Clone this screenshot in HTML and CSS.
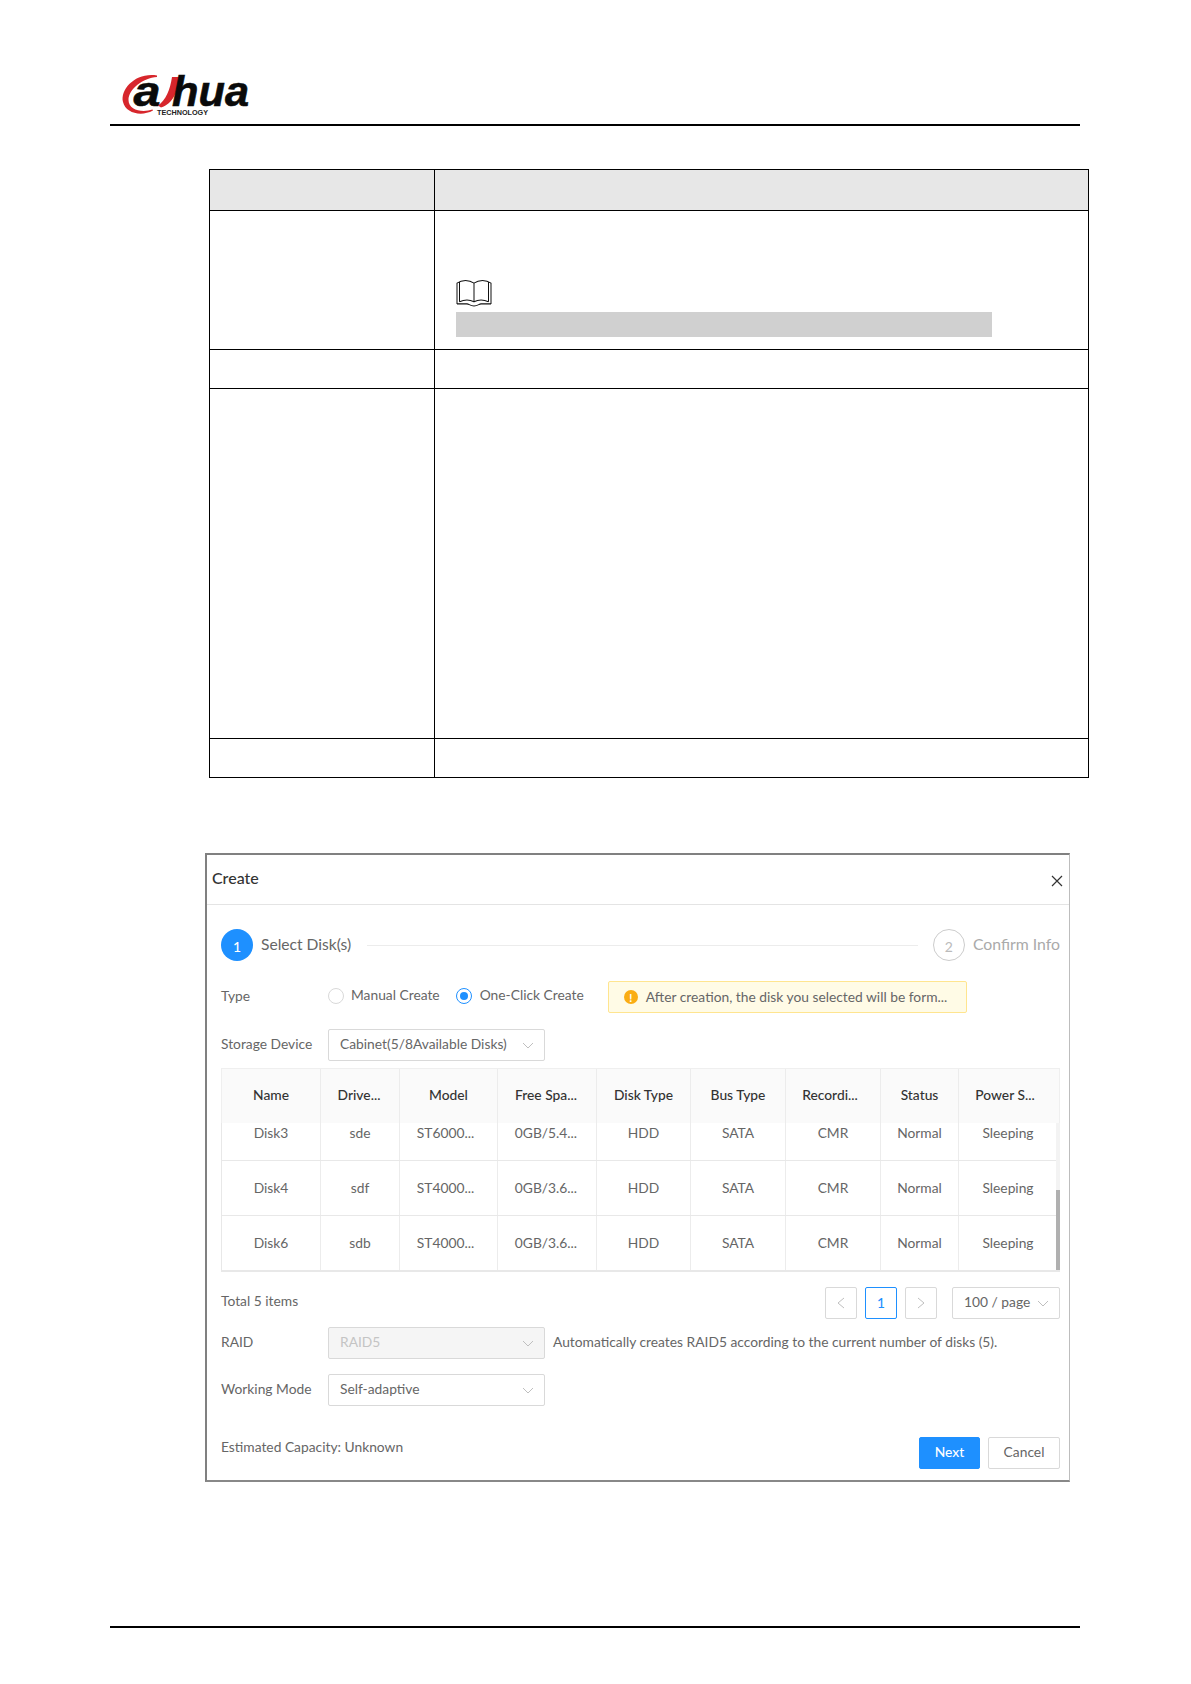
FILE: index.html
```html
<!DOCTYPE html>
<html lang="en">
<head>
<meta charset="utf-8">
<title>Create</title>
<link rel="stylesheet" href="styles.css">
</head>
<body>
<header class="page-head">
  <svg class="logo" width="130" height="46" viewBox="120 72 130 46">
    <path class="logo-red" d="M157 75.500C136 72 120 89 123 102C125.500 113 141 117 153 110.500L152.500 109.500C142 113 128.500 110 128.500 100C128.500 89 143 78 157 77Z"/>
    <text class="logo-word" x="133.500" y="106" textLength="27" lengthAdjust="spacingAndGlyphs">a</text>
    <path class="logo-red" d="M172 77L179 77C178 91 173 104 161 107.500L158 105.500C166 100 170 90 172 77Z"/>
    <text class="logo-word" x="172" y="106" textLength="77" lengthAdjust="spacingAndGlyphs">hua</text>
    <text class="logo-tech" x="157" y="115" textLength="51" lengthAdjust="spacingAndGlyphs">TECHNOLOGY</text>
  </svg>
</header>

<table class="spec">
  <tr class="spec-head"><td class="spec-a"></td><td></td></tr>
  <tr class="spec-note">
    <td></td>
    <td>
      <svg class="book" width="36" height="28" viewBox="0 0 36 27" preserveAspectRatio="none">
        <path d="M1 24V4C6 0.500 13 0.500 18 4C23 0.500 30 0.500 35 4V24"/>
        <path d="M3.500 22V3M32.500 22V3M18 4V22"/>
        <path d="M3.500 22C8 20 14 20 18 22C22 20 28 20 32.500 22"/>
        <path d="M1 24H11C13 24 14 26 18 26C22 26 23 24 25 24H35"/>
      </svg>
      <div class="redacted"></div>
    </td>
  </tr>
  <tr class="spec-short"><td></td><td></td></tr>
  <tr class="spec-tall"><td></td><td></td></tr>
  <tr class="spec-short"><td></td><td></td></tr>
</table>

<section class="dialog">
  <div class="dialog-head">
    <h2 class="dialog-title">Create</h2>
    <svg class="close" width="12" height="12" viewBox="0 0 12 12"><path d="M1 1L11 11M11 1L1 11"/></svg>
  </div>
  <div class="dialog-body">
    <div class="steps">
      <span class="step-dot step-dot-on">1</span>
      <span class="step-label">Select Disk(s)</span>
      <span class="step-line"></span>
      <span class="step-dot step-dot-off">2</span>
      <span class="step-label step-label-off">Confirm Info</span>
    </div>

    <div class="form-row form-type">
      <span class="form-label">Type</span>
      <span class="radio"></span><span class="radio-text">Manual Create</span>
      <span class="radio radio-on"></span><span class="radio-text radio-text-on">One-Click Create</span>
      <div class="alert">
        <span class="alert-icon">!</span>
        <span class="alert-text">After creation, the disk you selected will be form...</span>
      </div>
    </div>

    <div class="form-row form-storage">
      <span class="form-label">Storage Device</span>
      <div class="select"><span>Cabinet(5/8Available Disks)</span><svg class="chev" width="12" height="7" viewBox="0 0 12 7"><path d="M1 1L6 6L11 1"/></svg></div>
    </div>

    <div class="disk-table">
      <div class="disk-head">
        <div class="disk-row">
          <div>Name</div><div class="cell-cut-s">Drive...</div><div>Model</div><div class="cell-cut-s">Free Spa...</div><div>Disk Type</div><div>Bus Type</div><div class="cell-cut-l">Recordi...</div><div>Status</div><div class="cell-cut-l">Power S...</div>
        </div>
      </div>
      <div class="disk-body">
        <div class="disk-clip">
          <div class="disk-scroll">
            <div class="disk-row">
              <div>Disk3</div><div>sde</div><div class="cell-cut-l">ST6000...</div><div class="cell-cut-s">0GB/5.4...</div><div>HDD</div><div>SATA</div><div>CMR</div><div>Normal</div><div>Sleeping</div>
            </div>
            <div class="disk-row">
              <div>Disk4</div><div>sdf</div><div class="cell-cut-l">ST4000...</div><div class="cell-cut-s">0GB/3.6...</div><div>HDD</div><div>SATA</div><div>CMR</div><div>Normal</div><div>Sleeping</div>
            </div>
            <div class="disk-row">
              <div>Disk6</div><div>sdb</div><div class="cell-cut-l">ST4000...</div><div class="cell-cut-s">0GB/3.6...</div><div>HDD</div><div>SATA</div><div>CMR</div><div>Normal</div><div>Sleeping</div>
            </div>
          </div>
        </div>
        <div class="scrollbar"><div class="scroll-thumb"></div></div>
      </div>
    </div>

    <div class="pager">
      <span class="pager-total">Total 5 items</span>
      <span class="page-btn"><svg class="page-arrow" width="8" height="12" viewBox="0 0 8 12"><path d="M7 1L1 6L7 11"/></svg></span>
      <span class="page-btn page-current">1</span>
      <span class="page-btn"><svg class="page-arrow" width="8" height="12" viewBox="0 0 8 12"><path d="M1 1L7 6L1 11"/></svg></span>
      <div class="select select-page"><span>100 / page</span><svg class="chev" width="12" height="7" viewBox="0 0 12 7"><path d="M1 1L6 6L11 1"/></svg></div>
    </div>

    <div class="form-row form-raid">
      <span class="form-label">RAID</span>
      <div class="select select-off"><span>RAID5</span><svg class="chev" width="12" height="7" viewBox="0 0 12 7"><path d="M1 1L6 6L11 1"/></svg></div>
      <span class="form-hint">Automatically creates RAID5 according to the current number of disks (5).</span>
    </div>

    <div class="form-row form-mode">
      <span class="form-label">Working Mode</span>
      <div class="select"><span>Self-adaptive</span><svg class="chev" width="12" height="7" viewBox="0 0 12 7"><path d="M1 1L6 6L11 1"/></svg></div>
    </div>

    <div class="dialog-foot">
      <span class="capacity">Estimated Capacity: Unknown</span>
      <button class="btn btn-primary" type="button">Next</button>
      <button class="btn" type="button">Cancel</button>
    </div>
  </div>
</section>

<div class="page-foot"></div>
</body>
</html>
```
FILE: styles.css
```css
* { box-sizing: border-box; }
html, body { margin: 0; padding: 0; background: #fff; }
body { font-family: Lato, "Open Sans", "Liberation Sans", sans-serif; font-size: 13.800px; color: #666; width: 1191px; min-height: 1684px; overflow-x: hidden; }

.page-head { margin-left: 110px; width: 970px; height: 126px; padding: 72px 0 0 10px; border-bottom: 2px solid #000; }
.logo { display: block; overflow: visible; }
.logo-red { fill: #d7262c; }
.logo-word { font-family: "Liberation Sans", Arial, sans-serif; font-weight: 700; font-style: italic; font-size: 42px; fill: #0a0a0a; stroke: #0a0a0a; stroke-width: 0.6; }
.logo-tech { font-family: "Liberation Sans", Arial, sans-serif; font-weight: 700; font-size: 7px; fill: #222; }

.spec { margin: 43px 0 0 208.500px; width: 880px; border-collapse: collapse; table-layout: fixed; }
.spec td { border: 1px solid #000; padding: 0; vertical-align: top; }
.spec-a { width: 225px; }
.spec-head { height: 41px; }
.spec-head td { background: #e7e7e7; }
.spec-note { height: 139px; }
.spec-note td:last-child { padding: 68px 0 0 21px; }
.spec-short { height: 39px; }
.spec-tall { height: 350px; }
.book { display: block; fill: none; stroke: #111; stroke-width: 1; }
.redacted { margin-top: 5px; width: 536px; height: 25px; background: #d0d0d0; }

.dialog { margin: 75px 0 0 205px; width: 865px; height: 629px; background: #fff; border-style: solid; border-color: #808080 #bdbdbd #888 #808080; border-width: 2px 1px 2px 2px; }
.dialog-head { display: flex; align-items: center; justify-content: space-between; height: 50px; padding: 0 6px 0 5px; border-bottom: 1px solid #e4e4e4; }
.dialog-title { margin: 0 0 4px; font-size: 16px; font-weight: 500; color: #333; }
.close { margin-top: 3px; fill: none; stroke: #333; stroke-width: 1.200; }
.dialog-body { padding: 24px 9px 0 14px; }

.steps { display: flex; align-items: center; height: 32px; }
.step-dot { display: flex; align-items: center; justify-content: center; width: 32px; height: 32px; flex: none; border-radius: 50%; font-size: 14px; padding-top: 2px; }
.step-dot-on { background: #1e90ff; color: #fff; font-weight: 500; }
.step-dot-off { border: 1px solid #ccc; color: #bbb; }
.step-label { margin-left: 8px; padding-bottom: 2px; font-size: 15.600px; color: #666; }
.step-label-off { padding-bottom: 4px; font-size: 15.800px; color: #aaa; }
.step-line { flex: 1; height: 1px; margin: 1px 15px 0 16px; background: #ececec; }

.form-row { display: flex; align-items: center; }
.form-label { width: 107px; flex: none; padding-bottom: 4px; }
.form-type { margin-top: 20px; height: 32px; }
.form-storage { margin-top: 16px; }
.form-raid { margin-top: 8px; }
.form-mode { margin-top: 15px; }
.radio { width: 16px; height: 16px; flex: none; border: 1px solid #d9d9d9; border-radius: 50%; background: #fff; margin-bottom: 2px; }
.radio-on { margin-left: 16px; border-color: #1e90ff; position: relative; }
.radio-on::after { content: ""; position: absolute; left: 3px; top: 3px; width: 8px; height: 8px; border-radius: 50%; background: #1e90ff; }
.radio-text { margin-left: 7px; padding-bottom: 5px; }
.radio-text-on { margin-left: 8px; }
.alert { display: flex; align-items: center; gap: 8px; width: 359px; height: 32px; margin-left: 24px; padding-left: 15px; background: #fffbe6; border: 1px solid #ffe58f; border-radius: 2px; }
.alert-icon { display: flex; align-items: center; justify-content: center; width: 14px; height: 14px; border-radius: 50%; background: #faad14; color: #fff; font-size: 11px; font-weight: 700; }
.alert-text { padding-bottom: 2px; }

.select { display: flex; align-items: center; justify-content: space-between; width: 217px; height: 32px; padding: 0 10px 0 11px; background: #fff; border: 1px solid #d9d9d9; border-radius: 2px; }
.select > span { padding-bottom: 3px; }
.select-off { background: #f5f5f5; color: #c4c4c4; }
.select-page { width: 108px; }
.chev { flex: none; fill: none; stroke: #bfbfbf; stroke-width: 1; }
.form-hint { margin-left: 8px; padding-bottom: 4px; white-space: nowrap; }

.disk-table { margin-top: 7px; width: 839px; }
.disk-head { height: 55px; padding-right: 2px; background: #fafafa; border-top: 1px solid #efefef; border-left: 1px solid #efefef; border-right: 1px solid #efefef; color: #333; font-weight: 500; }
.disk-head .disk-row { height: 54px; border-bottom: 0; }
.disk-head .disk-row > div { padding-bottom: 4px; }
.disk-row { display: grid; grid-template-columns: 99px 79px 98px 99px 94px 95px 95px 78px 98px; height: 55px; border-bottom: 1px solid #e8e8e8; }
.disk-row > div { display: flex; align-items: center; justify-content: center; padding-bottom: 2px; border-right: 1px solid #ececec; }
.disk-row > .cell-cut-s { padding-right: 2px; }
.disk-row > .cell-cut-l { padding-right: 6px; }
.disk-row > div:last-child { border-right: 0; }
.disk-body { display: flex; border-left: 1px solid #e8e8e8; border-bottom: 2px solid #e8e8e8; }
.disk-clip { flex: 1; height: 147px; overflow: hidden; }
.disk-scroll { margin-top: -17px; }
.scrollbar { width: 4px; flex: none; display: flex; flex-direction: column; justify-content: flex-end; background: #f3f3f3; }
.scroll-thumb { height: 80px; background: #b0b0b0; }

.pager { display: flex; align-items: center; gap: 8px; margin-top: 15px; }
.pager-total { flex: 1; padding-bottom: 6px; }
.page-btn { display: flex; align-items: center; justify-content: center; width: 32px; height: 32px; background: #fff; border: 1px solid #d9d9d9; border-radius: 2px; }
.page-current { padding-bottom: 2px; border-color: #1e90ff; color: #1e90ff; font-weight: 500; }
.page-arrow { fill: none; stroke: #bfbfbf; stroke-width: 1; }
.pager .select-page { margin-left: 7px; padding: 0 10px 0 11px; }

.dialog-foot { display: flex; align-items: center; gap: 8px; margin-top: 31px; }
.capacity { flex: 1; margin-bottom: 14px; }
.btn { font: inherit; height: 32px; padding: 0 0 4px; width: 72px; background: #fff; color: #666; border: 1px solid #d9d9d9; border-radius: 2px; }
.btn-primary { width: 61px; background: #1e90ff; border-color: #1e90ff; color: #fff; font-weight: 500; }

.page-foot { margin: 144px 0 0 110px; width: 970px; height: 2px; background: #000; }
```
